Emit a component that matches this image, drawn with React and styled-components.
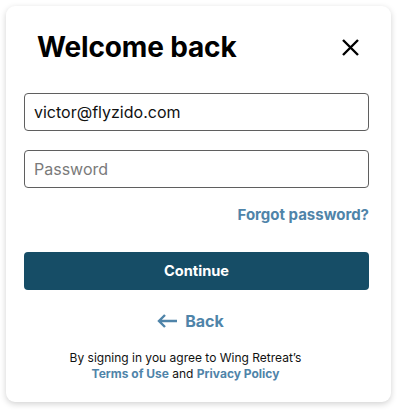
import React from 'react';
import styled, { createGlobalStyle } from 'styled-components';

const GlobalStyle = createGlobalStyle`
  body {
    margin: 0;
    background: #ffffff;
    font-family: Inter, "Noto Sans", sans-serif;
  }
`;

const Page = styled.div`
  padding: 6px 10px 11px 6px;
`;

const Card = styled.div`
  width: 385px;
  height: 396px;
  box-sizing: border-box;
  background: #ffffff;
  border-radius: 9px;
  box-shadow: 0 2px 6px rgba(0, 0, 0, 0.18);
  padding: 0 22px 0 18px;
  display: flex;
  flex-direction: column;
`;

const Header = styled.div`
  display: flex;
  align-items: center;
  justify-content: space-between;
  height: 80px;
  padding: 2px 9px 0 13px;
  box-sizing: border-box;
`;

const Title = styled.h1`
  margin: 0;
  font-size: 28px;
  font-weight: 700;
  color: #000;
  letter-spacing: -0.15px;
`;

const CloseButton = styled.button`
  border: none;
  background: none;
  padding: 0;
  width: 20px;
  height: 20px;
  display: flex;
  align-items: center;
  justify-content: center;
  cursor: pointer;
`;

const Field = styled.input`
  box-sizing: border-box;
  width: 100%;
  height: 38px;
  border: 1px solid #5f5f5f;
  border-radius: 4px;
  padding: 0 9px;
  font-family: Inter, "Noto Sans", sans-serif;
  font-size: 16px;
  color: #111;
  margin-top: ${p => p.$gap}px;
  &::placeholder {
    color: #7a7a7a;
  }
`;

const ForgotRow = styled.div`
  display: flex;
  justify-content: flex-end;
  margin-top: 17px;
`;

const Link = styled.a`
  color: #4f84a9;
  font-weight: 700;
  font-size: 15px;
  text-decoration: none;
  cursor: pointer;
`;

const PrimaryButton = styled.button`
  margin-top: 28px;
  height: 38px;
  width: 100%;
  border: none;
  border-radius: 4px;
  background: #164d66;
  color: #fff;
  font-family: Inter, "Noto Sans", sans-serif;
  font-weight: 700;
  font-size: 14.6px;
`;

const BackLink = styled.a`
  margin-top: 21px;
  margin-right: 12px;
  align-self: center;
  display: flex;
  align-items: center;
  gap: 8px;
  color: #4f84a9;
  font-weight: 700;
  font-size: 16px;
  cursor: pointer;
`;

const Legal = styled.p`
  margin: 19px 22px 0 0;
  text-align: center;
  font-size: 12px;
  line-height: 16px;
  color: #111;
`;

const LegalLink = styled(Link)`
  font-size: 12px;
`;

export default function App() {
  return (
    <Page>
      <GlobalStyle />
      <Card>
        <Header>
          <Title>Welcome back</Title>
          <CloseButton aria-label="Close">
            <svg width="19" height="19" viewBox="0 0 19 19">
              <path d="M2 2L17 17M17 2L2 17" stroke="#000" strokeWidth="2.4" />
            </svg>
          </CloseButton>
        </Header>
        <Field $gap={7} defaultValue="victor@flyzido.com" />
        <Field $gap={19} type="password" placeholder="Password" />
        <ForgotRow>
          <Link>Forgot password?</Link>
        </ForgotRow>
        <PrimaryButton>Continue</PrimaryButton>
        <BackLink>
          <svg width="20" height="14" viewBox="0 0 20 14">
            <path d="M20 7H2M8 1L2 7l6 6" stroke="#4f84a9" strokeWidth="2.4" fill="none" />
          </svg>
          Back
        </BackLink>
        <Legal>
          By signing in you agree to Wing Retreat’s
          <br />
          <LegalLink>Terms of Use</LegalLink> and <LegalLink>Privacy Policy</LegalLink>
        </Legal>
      </Card>
    </Page>
  );
}
